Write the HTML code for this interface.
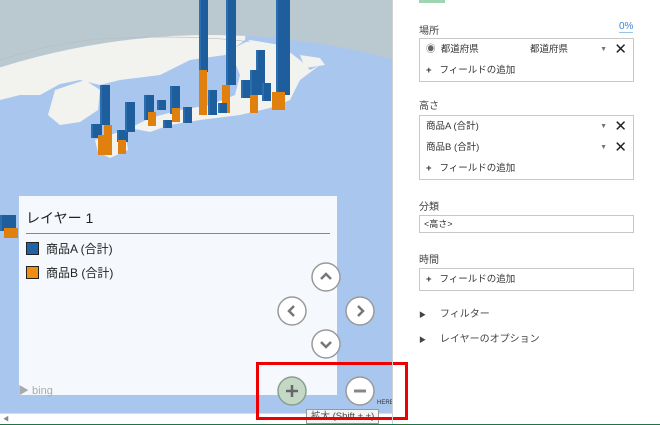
<!DOCTYPE html>
<html><head><meta charset="utf-8"><style>
html,body{margin:0;width:660px;height:425px;overflow:hidden}
body{position:relative;background:#fff;font-family:"Liberation Sans","Noto Sans CJK JP",sans-serif;font-size:10px;color:#333}
.a{position:absolute}
.b{position:absolute;background:#1f5e9c;border-left:2px solid #2c6fb0}
.o{position:absolute;background:#e0800f}
.lbl{position:absolute;left:419px;font-size:10px;color:#444}
.box{position:absolute;left:419px;width:213px;border:1px solid #c8c8c8;background:#fff}
.row{height:21px;line-height:21px;padding-left:6px;position:relative;font-size:9.5px}
.x{position:absolute;right:6px;top:0;font-size:15px;color:#222}
.dd{position:absolute;right:26px;top:0;font-size:7px;color:#777}
.circ{position:absolute;width:30px;height:30px}
</style></head><body>
<div class="a" style="left:0;top:0;width:392px;height:413px;background:#a9c6ef;overflow:hidden">
 <svg class="a" style="left:0;top:0" width="392" height="413">
  <defs><clipPath id="g"><ellipse cx="210" cy="780" rx="720" ry="745"/></clipPath></defs>
  <rect width="392" height="413" fill="#b9c9cf"/>
  <ellipse cx="210" cy="780" rx="720" ry="745" fill="#a9c6ef"/>
  <g clip-path="url(#g)" fill="#f2f2ef">
   <path d="M0 0 L250 0 L245 40 L225 55 L190 60 L160 75 L120 80 L100 85 L80 80 L60 84 L40 95 L20 95 L0 100 Z"/>
   <path d="M55 90 L85 80 L100 90 L98 110 L80 122 L60 125 L48 115 Z"/>
   <path d="M230 50 L250 40 L280 45 L300 60 L310 70 L320 65 L300 80 L290 100 L270 108 L240 115 L200 120 L170 125 L150 132 L130 128 L150 118 L180 110 L210 105 L235 95 L240 75 Z"/>
   <path d="M95 140 L125 130 L128 150 L110 158 L98 152 Z"/>
   <path d="M300 55 L320 58 L325 65 L305 68 Z"/>
  </g>
  <path d="M0 60 Q60 40 120 38 Q200 35 250 42" stroke="#bbb" fill="none" stroke-width="0.6"/>
 </svg>
 <div class="b" style="left:199px;top:0;width:7px;height:72px"></div><div class="o" style="left:199px;top:70px;width:8px;height:45px"></div>
 <div class="b" style="left:226px;top:0;width:8px;height:85px"></div><div class="o" style="left:222px;top:85px;width:8px;height:28px"></div>
 <div class="b" style="left:276px;top:0;width:12px;height:95px"></div><div class="o" style="left:272px;top:92px;width:13px;height:18px"></div>
 <div class="b" style="left:256px;top:50px;width:7px;height:45px"></div>
 <div class="b" style="left:250px;top:70px;width:8px;height:25px"></div><div class="o" style="left:250px;top:95px;width:8px;height:18px"></div>
 <div class="b" style="left:100px;top:85px;width:8px;height:40px"></div><div class="o" style="left:104px;top:125px;width:8px;height:30px"></div>
 <div class="b" style="left:91px;top:124px;width:9px;height:14px"></div><div class="o" style="left:98px;top:135px;width:8px;height:20px"></div>
 <div class="b" style="left:117px;top:130px;width:9px;height:12px"></div><div class="o" style="left:118px;top:140px;width:8px;height:14px"></div>
 <div class="b" style="left:125px;top:102px;width:8px;height:30px"></div>
 <div class="b" style="left:144px;top:95px;width:8px;height:25px"></div><div class="o" style="left:148px;top:112px;width:8px;height:14px"></div>
 <div class="b" style="left:157px;top:100px;width:7px;height:10px"></div>
 <div class="b" style="left:170px;top:86px;width:8px;height:28px"></div><div class="o" style="left:172px;top:108px;width:8px;height:14px"></div>
 <div class="b" style="left:183px;top:107px;width:7px;height:16px"></div>
 <div class="b" style="left:163px;top:120px;width:7px;height:8px"></div>
 <div class="b" style="left:208px;top:90px;width:7px;height:25px"></div>
 <div class="b" style="left:218px;top:103px;width:7px;height:10px"></div>
 <div class="b" style="left:241px;top:80px;width:7px;height:18px"></div>
 <div class="b" style="left:262px;top:83px;width:7px;height:18px"></div>
 <div class="b" style="left:0;top:215px;width:14px;height:16px"></div><div class="o" style="left:4px;top:228px;width:14px;height:10px"></div>
 <div class="a" style="left:19px;top:196px;width:318px;height:199px;background:#f5f9fe"></div>
 <div class="a" style="left:26px;top:208px;font-size:14px;color:#222">レイヤー 1</div>
 <div class="a" style="left:26px;top:233px;width:304px;height:1px;background:#888"></div>
 <div class="a" style="left:26px;top:242px;width:11px;height:11px;background:#1f63a8;border:1px solid #222"></div>
 <div class="a" style="left:46px;top:240px;font-size:12px;color:#222">商品A (合計)</div>
 <div class="a" style="left:26px;top:266px;width:11px;height:11px;background:#f28d14;border:1px solid #222"></div>
 <div class="a" style="left:46px;top:264px;font-size:12px;color:#222">商品B (合計)</div>
 <div class="a" style="left:18px;top:382px;font-size:11px;color:#aaa">▶ bing</div>
 <svg class="circ" style="left:311px;top:262px" viewBox="0 0 30 30"><circle cx="15" cy="15" r="14" fill="#fff" stroke="#999" stroke-width="1.5"/><path d="M10 17 L15 12 L20 17" stroke="#777" stroke-width="2.5" fill="none"/></svg>
 <svg class="circ" style="left:277px;top:296px" viewBox="0 0 30 30"><circle cx="15" cy="15" r="14" fill="#fff" stroke="#999" stroke-width="1.5"/><path d="M17 10 L12 15 L17 20" stroke="#777" stroke-width="2.5" fill="none"/></svg>
 <svg class="circ" style="left:345px;top:296px" viewBox="0 0 30 30"><circle cx="15" cy="15" r="14" fill="#fff" stroke="#999" stroke-width="1.5"/><path d="M13 10 L18 15 L13 20" stroke="#777" stroke-width="2.5" fill="none"/></svg>
 <svg class="circ" style="left:311px;top:329px" viewBox="0 0 30 30"><circle cx="15" cy="15" r="14" fill="#fff" stroke="#999" stroke-width="1.5"/><path d="M10 13 L15 18 L20 13" stroke="#777" stroke-width="2.5" fill="none"/></svg>
 <svg class="circ" style="left:277px;top:376px" viewBox="0 0 30 30"><circle cx="15" cy="15" r="14" fill="#c3d9c6" stroke="#8a9e8c" stroke-width="1.5"/><path d="M15 9 V21 M9 15 H21" stroke="#666" stroke-width="2.5"/></svg>
 <svg class="circ" style="left:345px;top:376px" viewBox="0 0 30 30"><circle cx="15" cy="15" r="14" fill="#fff" stroke="#999" stroke-width="1.5"/><path d="M9 15 H21" stroke="#888" stroke-width="3"/></svg>
 <div class="a" style="left:377px;top:400px;font-size:6px;color:#333">HERE</div>
</div>
<div class="a" style="left:0;top:413px;width:392px;height:11px;background:#fff;border-top:1px solid #ddd"></div>
<div class="a" style="left:3px;top:414px;font-size:6px;color:#888">◀</div>
<div class="a" style="left:306px;top:409px;height:13px;line-height:13px;padding:0 4px;background:#f4f4f4;border:1px solid #999;font-size:9.5px;color:#444">拡大 (Shift + +)</div>
<div class="a" style="left:256px;top:362px;width:152px;height:58px;border:3px solid #e00;box-sizing:border-box"></div>
<div class="a" style="left:392px;top:0;width:1px;height:424px;background:#d0d0d0"></div>
<div class="a" style="left:419px;top:0;width:26px;height:3px;background:#9fd6b2"></div>
<div class="lbl" style="top:22px">場所</div>
<div class="a" style="left:619px;top:21px;font-size:10px;color:#3a86d8;border-bottom:1px solid #9cc3ea">0%</div>
<div class="box" style="top:38px"><div class="row"><span style="color:#666">◉</span>&nbsp; 都道府県<span style="position:absolute;left:110px">都道府県</span><span class="dd">▼</span><span class="x">✕</span></div><div class="row"><b>+</b>&nbsp;&nbsp; フィールドの追加</div></div>
<div class="lbl" style="top:97px">高さ</div>
<div class="box" style="top:115px"><div class="row">商品A (合計)<span class="dd">▼</span><span class="x">✕</span></div><div class="row">商品B (合計)<span class="dd">▼</span><span class="x">✕</span></div><div class="row"><b>+</b>&nbsp;&nbsp; フィールドの追加</div></div>
<div class="lbl" style="top:198px">分類</div>
<div class="box" style="top:215px;height:16px;line-height:16px;padding-left:4px;width:209px;font-size:9px">&lt;高さ&gt;</div>
<div class="lbl" style="top:251px">時間</div>
<div class="box" style="top:268px"><div class="row"><b>+</b>&nbsp;&nbsp; フィールドの追加</div></div>
<div class="lbl" style="top:305px"><span style="font-size:7px">▶</span>&nbsp;&nbsp;&nbsp;&nbsp; フィルター</div>
<div class="lbl" style="top:330px"><span style="font-size:7px">▶</span>&nbsp;&nbsp;&nbsp;&nbsp; レイヤーのオプション</div>
<div class="a" style="left:0;top:424px;width:660px;height:1px;background:#217346"></div>
</body></html>
